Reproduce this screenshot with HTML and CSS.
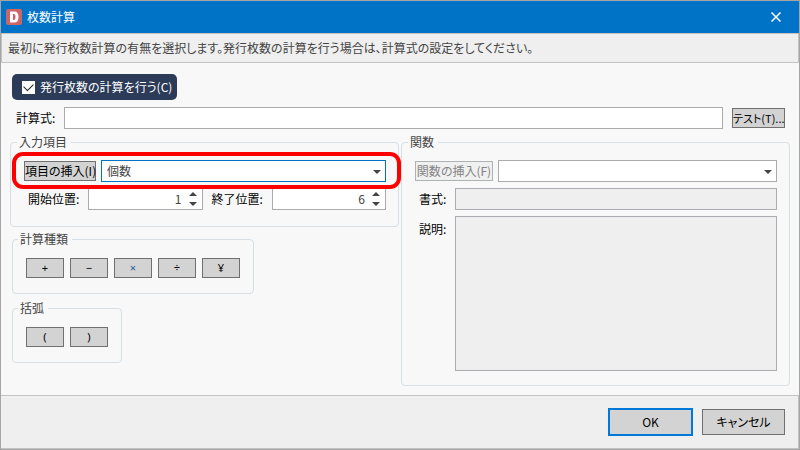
FILE: index.html
```
<!DOCTYPE html>
<html lang="ja">
<head>
    <meta charset="UTF-8">
    <meta name="viewport" content="width=device-width, initial-scale=1.0">
    <title>枚数計算</title>
    <link rel="stylesheet" href="styles.css">
</head>
<body>
    <div class="dialog">
        <header class="titlebar">
            <svg class="logo" width="16" height="16" viewBox="0 0 16 16" aria-hidden="true">
                <rect width="16" height="16" rx="2" fill="#cd6468"/>
                <path d="M4 2.5H8.5Q12.5 2.5 12.5 8T8.5 13.5H4ZM7 5V11H8Q9.5 11 9.5 8T8 5Z" fill="#fff" fill-rule="evenodd"/>
            </svg>
            <h1>枚数計算</h1>
            <button type="button" class="close" aria-label="閉じる">
                <svg width="10" height="10" viewBox="0 0 10 10">
                    <path d="M0.5 0.5L9.5 9.5M9.5 0.5L0.5 9.5" stroke="#fff" stroke-width="1.5"/>
                </svg>
            </button>
        </header>

        <p class="message">最初に発行枚数計算の有無を選択します。発行枚数の計算を行う場合は、計算式の設定をしてください。</p>

        <main>
            <label class="calc-toggle">
                <input type="checkbox" checked>
                発行枚数の計算を行う(C)
            </label>

            <div class="formula-row">
                <label for="formula">計算式:</label>
                <input type="text" id="formula">
                <button type="button">テスト(T)...</button>
            </div>

            <div class="columns">
                <div class="left">
                    <fieldset class="items-group">
                        <legend>入力項目</legend>
                        <div class="row">
                            <button type="button">項目の挿入(I)</button>
                            <div class="select-box">
                                <select class="active" aria-label="入力項目">
                                    <option>個数</option>
                                </select>
                            </div>
                        </div>
                        <div class="row positions">
                            <label for="start">開始位置:</label>
                            <div class="spinner">
                                <input type="number" id="start" value="1">
                                <div class="arrows">
                                    <button type="button" class="up" aria-label="増やす"></button>
                                    <button type="button" class="down" aria-label="減らす"></button>
                                </div>
                            </div>
                            <label for="end">終了位置:</label>
                            <div class="spinner">
                                <input type="number" id="end" value="6">
                                <div class="arrows">
                                    <button type="button" class="up" aria-label="増やす"></button>
                                    <button type="button" class="down" aria-label="減らす"></button>
                                </div>
                            </div>
                        </div>
                        <div class="highlight"></div>
                    </fieldset>

                    <fieldset class="small-group">
                        <legend>計算種類</legend>
                        <div class="keys">
                            <button type="button">+</button>
                            <button type="button">−</button>
                            <button type="button" class="times">×</button>
                            <button type="button">÷</button>
                            <button type="button">¥</button>
                        </div>
                    </fieldset>

                    <fieldset class="small-group brackets">
                        <legend>括弧</legend>
                        <div class="keys">
                            <button type="button">(</button>
                            <button type="button">)</button>
                        </div>
                    </fieldset>
                </div>

                <fieldset class="functions-group">
                    <legend>関数</legend>
                    <div class="row">
                        <button type="button" disabled>関数の挿入(F)</button>
                        <div class="select-box">
                            <select aria-label="関数"></select>
                        </div>
                    </div>
                    <div class="row">
                        <label for="format">書式:</label>
                        <input type="text" id="format" readonly>
                    </div>
                    <div class="row">
                        <label for="description">説明:</label>
                        <textarea id="description" readonly></textarea>
                    </div>
                </fieldset>
            </div>
        </main>

        <footer>
            <button type="button" class="ok">OK</button>
            <button type="button">キャンセル</button>
        </footer>
    </div>
</body>
</html>
```
FILE: styles.css
```
* {
    box-sizing: border-box;
}

body, button, input, select, textarea {
    font-family: "Noto Sans CJK JP", sans-serif;
    font-size: 12px;
    line-height: 16px;
    font-feature-settings: "palt";
}

body {
    margin: 0;
    color: #000;
    background-color: #f8f8f8;
}

.dialog {
    display: flex;
    flex-direction: column;
    min-height: 100vh;
    border: 1px solid #a5a5a5;
}

.titlebar {
    display: flex;
    align-items: center;
    height: 32px;
    padding: 0 18px 0 5px;
    background-color: #0173c7;
    color: #fff;
}

.titlebar h1 {
    flex: 1;
    margin: 0 0 0 5px;
    font-size: 12px;
    font-weight: normal;
}

.titlebar .close {
    display: flex;
    align-items: center;
    padding: 0;
    border: none;
    background: none;
}

.message {
    margin: 0;
    padding: 6px;
    border: 1px solid #c3c3c3;
    background-color: #efefef;
    color: #444;
}

main {
    flex: 1;
    padding: 11px 9px 9px;
}

button {
    height: 20px;
    padding: 0;
    border: 1px solid #707070;
    border-radius: 0;
    background-color: #d3d3d3;
    color: #000;
    white-space: nowrap;
}

button:disabled {
    border-color: #adb2b5;
    background-color: #f0f0f0;
    color: #838383;
}

input[type="text"], select, textarea {
    display: block;
    height: 22px;
    margin: 0;
    padding: 0 5px;
    border: 1px solid #ababab;
    border-radius: 0;
    background-color: #fff;
    color: #444;
    outline: none;
}

.calc-toggle {
    display: flex;
    align-items: center;
    gap: 5px;
    width: fit-content;
    height: 26px;
    margin-left: 2px;
    padding: 0 5px 0 10px;
    border-radius: 5px;
    background-color: #2b3b58;
    color: #fff;
}

.calc-toggle input {
    display: grid;
    place-items: center;
    appearance: none;
    width: 13px;
    height: 13px;
    margin: 0;
    background-color: #fff;
}

.calc-toggle input:checked::before {
    content: "";
    width: 8px;
    height: 5px;
    margin-bottom: 3px;
    border-left: 1px solid #222;
    border-bottom: 1px solid #222;
    transform: rotate(-45deg);
}

.formula-row {
    display: flex;
    align-items: center;
    margin-top: 7px;
    padding: 0 5px 0 6px;
}

.formula-row label {
    width: 48px;
}

.formula-row input {
    flex: 1;
}

.formula-row button {
    width: 53px;
    margin-left: 9px;
    font-size: 11px;
}

.columns {
    display: grid;
    grid-template-columns: minmax(0, 1fr) minmax(0, 1fr);
    gap: 2px;
    margin-top: 5px;
}

fieldset {
    position: relative;
    min-width: 0;
    margin: 0;
    padding: 10px 12px 16px 6px;
    border: 1px solid #d5dfe5;
    border-radius: 4px;
}

legend {
    height: 16px;
    padding: 0 4px 0 2px;
    color: #444;
}

.row {
    display: flex;
    align-items: center;
    gap: 5px;
    padding-left: 7px;
}

.row + .row {
    margin-top: 6px;
}

.row label {
    white-space: nowrap;
}

.row button {
    width: 72px;
}

.select-box {
    position: relative;
    flex: 1;
}

.select-box select {
    appearance: none;
    width: 100%;
}

.select-box select.active {
    border-color: #0173c7;
}

.select-box::after {
    content: "";
    position: absolute;
    top: 10px;
    right: 5px;
    border: 4px solid transparent;
    border-top-color: #444;
    border-bottom: none;
    pointer-events: none;
}

.row.positions {
    gap: 9px;
    padding-left: 11px;
}

.spinner {
    display: flex;
    flex: 1;
    min-width: 0;
    height: 22px;
    border: 1px solid #ababab;
    background-color: #fff;
}

.spinner input {
    appearance: textfield;
    flex: 1;
    min-width: 0;
    padding: 0;
    border: none;
    outline: none;
    background: none;
    color: #444;
    text-align: right;
}

.spinner input::-webkit-inner-spin-button {
    display: none;
}

.spinner .arrows {
    display: flex;
    flex-direction: column;
    justify-content: center;
    gap: 6px;
    width: 20px;
    padding-left: 7px;
}

.spinner button {
    width: 8px;
    height: 4px;
    border: 4px solid transparent;
    background: none;
}

.spinner .up {
    border-top: none;
    border-bottom-color: #444;
}

.spinner .down {
    border-bottom: none;
    border-top-color: #444;
}

/* red frame over the first row */
.highlight {
    position: absolute;
    top: 2px;
    left: 1px;
    right: -3px;
    height: 37px;
    border: 4px solid #f00;
    border-radius: 11px;
    pointer-events: none;
}

.small-group {
    width: fit-content;
    margin: 4px 0 0 2px;
    padding: 11px 13px 15px 5px;
}

.brackets {
    margin-top: 6px;
}

.keys {
    display: flex;
    gap: 6px;
    padding-left: 8px;
}

.keys button {
    width: 38px;
    font-family: "Noto Sans", sans-serif;
    font-size: 11px;
}

.keys .times {
    color: #1f5c99;
}

.functions-group {
    padding-bottom: 14px;
}

.functions-group .row button {
    width: 78px;
}

.functions-group .row label {
    width: 35px;
    padding-left: 4px;
}

.functions-group .row input, .functions-group textarea {
    flex: 1;
    min-width: 0;
    background-color: #efefef;
    border-color: #abadb3;
}

.functions-group textarea {
    height: 155px;
    resize: none;
}

.functions-group .row:last-child {
    align-items: flex-start;
}

.functions-group .row:last-child label {
    padding-top: 5px;
}

footer {
    display: flex;
    justify-content: flex-end;
    align-items: center;
    gap: 9px;
    height: 54px;
    padding: 0 13px;
    border-top: 1px solid #c3c3c3;
    border-right: 1px solid #c3c3c3;
    border-bottom: 1px solid #c3c3c3;
    background-color: #efefef;
}

footer button {
    width: 83px;
    height: 26px;
}

footer .ok {
    width: 85px;
    height: 28px;
    border: 2px solid #0078d7;
}
```
